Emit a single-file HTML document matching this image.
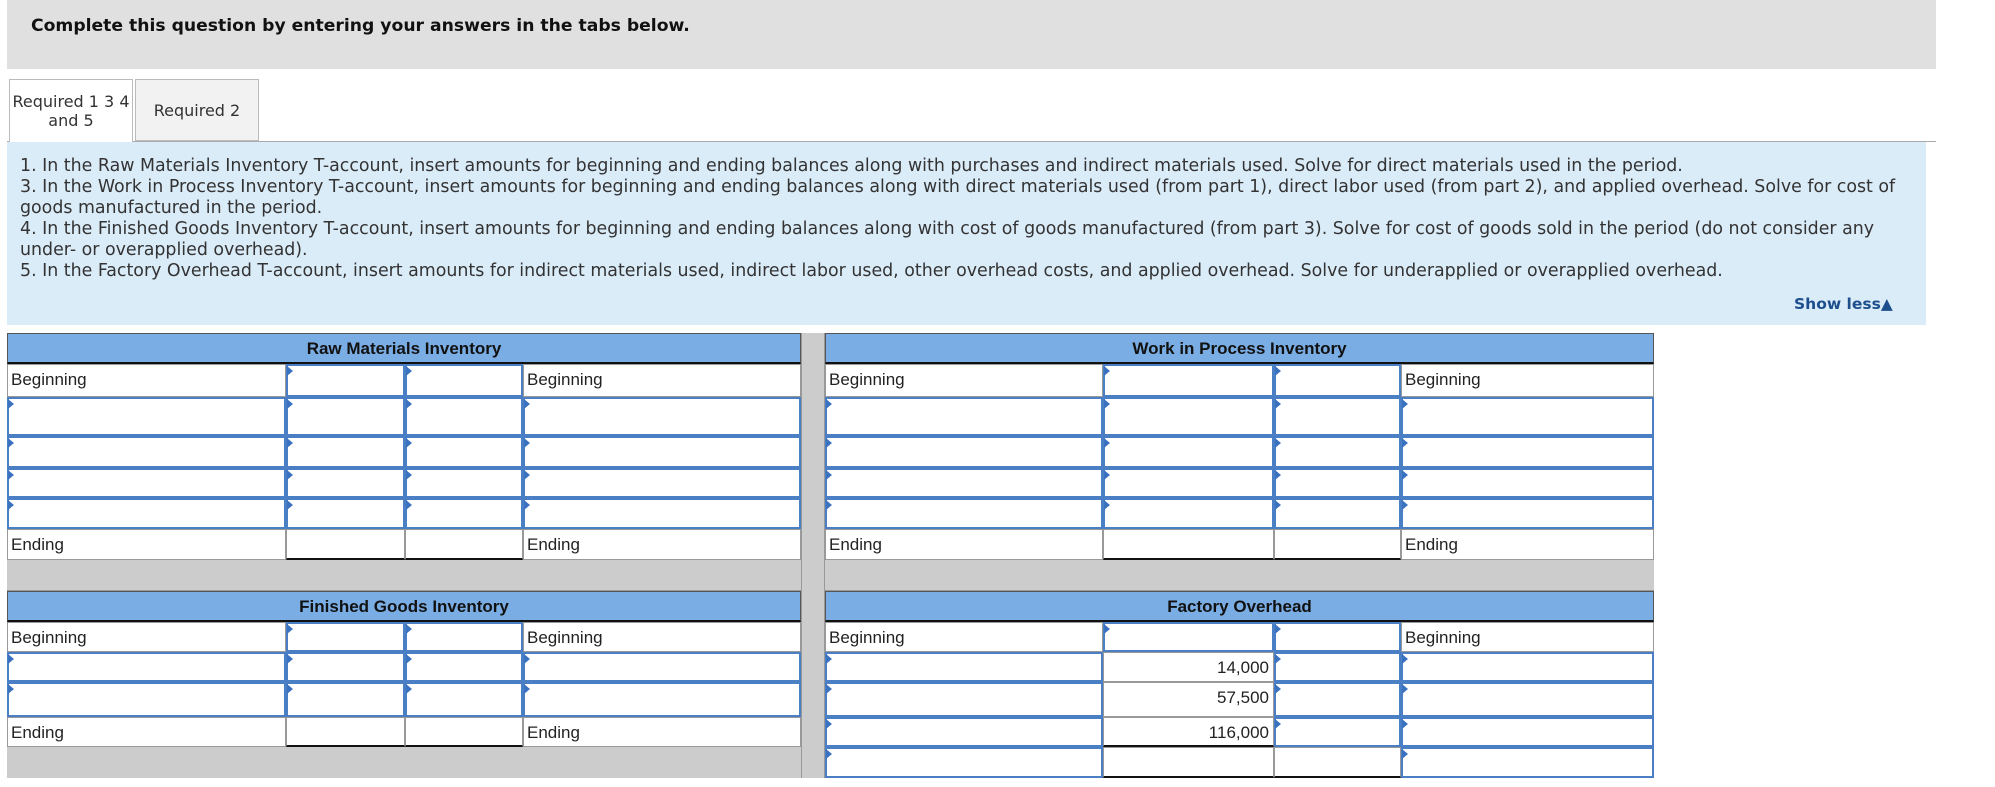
<!DOCTYPE html>
<html><head><meta charset="utf-8"><style>
body{margin:0;width:1995px;height:787px;background:#fff;position:relative;overflow:hidden;font-family:"Liberation Sans",Arial,sans-serif}
.hd{position:absolute;left:7px;top:0;width:1929px;height:69px;background:#e0e0e0}
.hd b{position:absolute;left:24px;top:16px;font:bold 17.2px "DejaVu Sans",sans-serif;color:#111}
.tab{position:absolute;top:79px;height:62px;box-sizing:border-box;border:1px solid #bbb;font:16px "DejaVu Sans",sans-serif;color:#333;text-align:center;display:flex;align-items:center;justify-content:center;line-height:19px}
.ln{position:absolute;left:7px;top:141px;width:1929px;height:1px;background:#aaa}
.bx{position:absolute;left:7px;top:142px;width:1919px;height:183px;background:#dbecf9}
.tx{position:absolute;left:20px;top:156px;width:1900px;font:17.4px "DejaVu Sans",sans-serif;color:#333;line-height:21px}
.sl{position:absolute;left:1794px;top:295px;font:bold 15.5px "DejaVu Sans",sans-serif;color:#1d4f8c}
.div{position:absolute;left:801px;top:333px;width:24px;height:445px;background:#ccc;border-left:1px solid #999;border-right:1px solid #999;box-sizing:border-box}
.th{position:absolute;height:31px;background:#7aade3;border:1px solid #555;border-bottom:2px solid #111;box-sizing:border-box;text-align:center;font:bold 17px "Liberation Sans",sans-serif;line-height:30px;color:#111}
.gr{position:absolute;background:#ccc}
.r{position:absolute;left:0;width:1995px}
.r>div{position:absolute;top:0;bottom:0;box-sizing:border-box;background:#fff;border:1px solid #999;font-size:17px;color:#222;padding-left:3px;line-height:30px}
.r>div.i{border:2px solid #4a7fc6}
.r>div.i::before{content:"";position:absolute;left:-1px;top:0;border-left:6px solid #3b72c0;border-top:5px solid transparent;border-bottom:5px solid transparent}
.r>div.n{text-align:right;padding-right:4px}
.r>div.u{border-bottom:2px solid #111}
.a{left:7px;width:279px}.b{left:286px;width:119px}.c{left:405px;width:118px}.d{left:523px;width:278px}
.e{left:825px;width:278px}.f{left:1103px;width:171px}.g{left:1274px;width:127px}.h{left:1401px;width:253px}
</style></head><body>
<div class="hd"><b>Complete this question by entering your answers in the tabs below.</b></div>
<div class="tab" style="left:9px;width:124px;background:#fff;border-bottom:none;z-index:2;height:63px">Required 1 3 4<br>and 5</div>
<div class="tab" style="left:135px;width:124px;background:#f2f2f2">Required 2</div>
<div class="ln"></div>
<div class="bx"></div>
<div class="tx">1. In the Raw Materials Inventory T-account, insert amounts for beginning and ending balances along with purchases and indirect materials used. Solve for direct materials used in the period.<br>3. In the Work in Process Inventory T-account, insert amounts for beginning and ending balances along with direct materials used (from part 1), direct labor used (from part 2), and applied overhead. Solve for cost of goods manufactured in the period.<br>4. In the Finished Goods Inventory T-account, insert amounts for beginning and ending balances along with cost of goods manufactured (from part 3). Solve for cost of goods sold in the period (do not consider any under- or overapplied overhead).<br>5. In the Factory Overhead T-account, insert amounts for indirect materials used, indirect labor used, other overhead costs, and applied overhead. Solve for underapplied or overapplied overhead.</div>
<div class="sl">Show less▲</div>

<div class="div"></div>
<div class="th" style="left:7px;top:333px;width:794px">Raw Materials Inventory</div>
<div class="th" style="left:825px;top:333px;width:829px">Work in Process Inventory</div>

<div class="r" style="top:364px;height:33px"><div class="a">Beginning</div><div class="b i"></div><div class="c i"></div><div class="d">Beginning</div><div class="e">Beginning</div><div class="f i"></div><div class="g i"></div><div class="h">Beginning</div></div>
<div class="r" style="top:397px;height:39px"><div class="a i"></div><div class="b i"></div><div class="c i"></div><div class="d i"></div><div class="e i"></div><div class="f i"></div><div class="g i"></div><div class="h i"></div></div>
<div class="r" style="top:436px;height:32px"><div class="a i"></div><div class="b i"></div><div class="c i"></div><div class="d i"></div><div class="e i"></div><div class="f i"></div><div class="g i"></div><div class="h i"></div></div>
<div class="r" style="top:468px;height:30px"><div class="a i"></div><div class="b i"></div><div class="c i"></div><div class="d i"></div><div class="e i"></div><div class="f i"></div><div class="g i"></div><div class="h i"></div></div>
<div class="r" style="top:498px;height:31px"><div class="a i"></div><div class="b i"></div><div class="c i"></div><div class="d i"></div><div class="e i"></div><div class="f i"></div><div class="g i"></div><div class="h i"></div></div>
<div class="r" style="top:529px;height:31px"><div class="a">Ending</div><div class="b u"></div><div class="c u"></div><div class="d">Ending</div><div class="e">Ending</div><div class="f u"></div><div class="g u"></div><div class="h">Ending</div></div>

<div class="gr" style="left:7px;top:560px;width:794px;height:31px;border-bottom:1px solid #999;box-sizing:border-box"></div>
<div class="gr" style="left:825px;top:560px;width:829px;height:31px;border-bottom:1px solid #999;box-sizing:border-box"></div>
<div class="th" style="left:7px;top:591px;width:794px">Finished Goods Inventory</div>
<div class="th" style="left:825px;top:591px;width:829px">Factory Overhead</div>

<div class="r" style="top:622px;height:30px"><div class="a">Beginning</div><div class="b i"></div><div class="c i"></div><div class="d">Beginning</div><div class="e">Beginning</div><div class="f i"></div><div class="g i"></div><div class="h">Beginning</div></div>
<div class="r" style="top:652px;height:30px"><div class="a i"></div><div class="b i"></div><div class="c i"></div><div class="d i"></div><div class="e i"></div><div class="f n">14,000</div><div class="g i"></div><div class="h i"></div></div>
<div class="r" style="top:682px;height:35px"><div class="a i"></div><div class="b i"></div><div class="c i"></div><div class="d i"></div><div class="e i"></div><div class="f n">57,500</div><div class="g i"></div><div class="h i"></div></div>
<div class="r" style="top:717px;height:30px"><div class="a">Ending</div><div class="b u"></div><div class="c u"></div><div class="d">Ending</div><div class="e i"></div><div class="f n u">116,000</div><div class="g i"></div><div class="h i"></div></div>
<div class="gr" style="left:7px;top:747px;width:794px;height:31px"></div>
<div class="r" style="top:747px;height:31px"><div class="e i"></div><div class="f u"></div><div class="g u"></div><div class="h i"></div></div>
</body></html>
